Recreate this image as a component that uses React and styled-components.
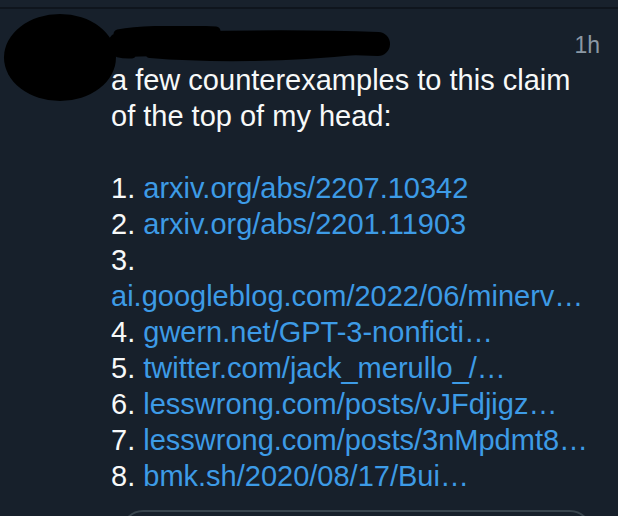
import React from 'react';
import styled, { createGlobalStyle } from 'styled-components';

const GlobalStyle = createGlobalStyle`
  html, body {
    margin: 0;
    padding: 0;
    background: #17202b;
  }
`;

const Page = styled.div`
  width: 618px;
  height: 516px;
  overflow: hidden;
  background: #17202b;
  font-family: 'Liberation Sans', Arial, sans-serif;
`;

const TopStrip = styled.div`
  height: 7px;
  background: #18212c;
`;

const Divider = styled.div`
  height: 2px;
  background: #0f151d;
`;

const Tweet = styled.article`
  display: flex;
  padding-top: 5px;
`;

// redacted avatar: a black blob drawn over the picture
const AvatarBlob = styled.div`
  flex-shrink: 0;
  width: 112px;
  height: 87px;
  margin-left: 4px;
  margin-right: -5px;
  border-radius: 50%;
  background: #000;
  position: relative;
  z-index: 1;
`;

const Content = styled.div`
  flex: 1;
  min-width: 0;
  padding-right: 18px;
`;

const Header = styled.div`
  display: flex;
  justify-content: space-between;
  align-items: flex-start;
  height: 48px;
`;

const NameScribble = styled.svg`
  display: block;
  margin-left: -11px;
  margin-top: 12px;
`;

const Time = styled.span`
  margin-top: 18px;
  font-size: 23px;
  line-height: 26px;
  color: #8b98a5;
`;

const Body = styled.div`
  font-size: 29px;
  line-height: 36px;
  color: #f7f9f9;
  white-space: nowrap;
`;

const Line = styled.div`
  min-height: 36px;
`;

const Link = styled.span`
  color: #3d9be6;
  display: ${(p) => (p.$block ? 'block' : 'inline')};
`;

const ReplyBox = styled.div`
  height: 40px;
  margin: 16px 8px 0 10px;
  border: 2px solid #38444d;
  border-radius: 26px;
`;

const items = [
  { n: '1.', url: 'arxiv.org/abs/2207.10342' },
  { n: '2.', url: 'arxiv.org/abs/2201.11903' },
  { n: '3.', url: 'ai.googleblog.com/2022/06/minerv…', wrap: true },
  { n: '4.', url: 'gwern.net/GPT-3-nonficti…' },
  { n: '5.', url: 'twitter.com/jack_merullo_/…' },
  { n: '6.', url: 'lesswrong.com/posts/vJFdjigz…' },
  { n: '7.', url: 'lesswrong.com/posts/3nMpdmt8…' },
  { n: '8.', url: 'bmk.sh/2020/08/17/Bui…' },
];

const App = () => (
  <Page>
    <GlobalStyle />
    <TopStrip />
    <Divider />
    <Tweet>
      <AvatarBlob />
      <Content>
        <Header>
          <NameScribble width="295" height="36" viewBox="0 0 295 36">
            <path d="M18 8 C 40 4, 80 3, 116 5" stroke="#000" strokeWidth="9" strokeLinecap="round" fill="none" />
            <path d="M22 19 C 90 17, 200 15, 278 18" stroke="#000" strokeWidth="24" strokeLinecap="round" fill="none" />
            <path d="M50 28 C 110 33, 190 32, 255 25" stroke="#000" strokeWidth="8" strokeLinecap="round" fill="none" />
            <path d="M14 12 C 5 21, 12 30, 32 29" stroke="#000" strokeWidth="7" strokeLinecap="round" fill="none" />
          </NameScribble>
          <Time>1h</Time>
        </Header>
        <Body>
          <Line>a few counterexamples to this claim</Line>
          <Line>of the top of my head:</Line>
          <Line />
          {items.map((it) => (
            <Line key={it.n}>
              {it.n} <Link $block={it.wrap}>{it.url}</Link>
            </Line>
          ))}
        </Body>
        <ReplyBox />
      </Content>
    </Tweet>
  </Page>
);

export default App;
